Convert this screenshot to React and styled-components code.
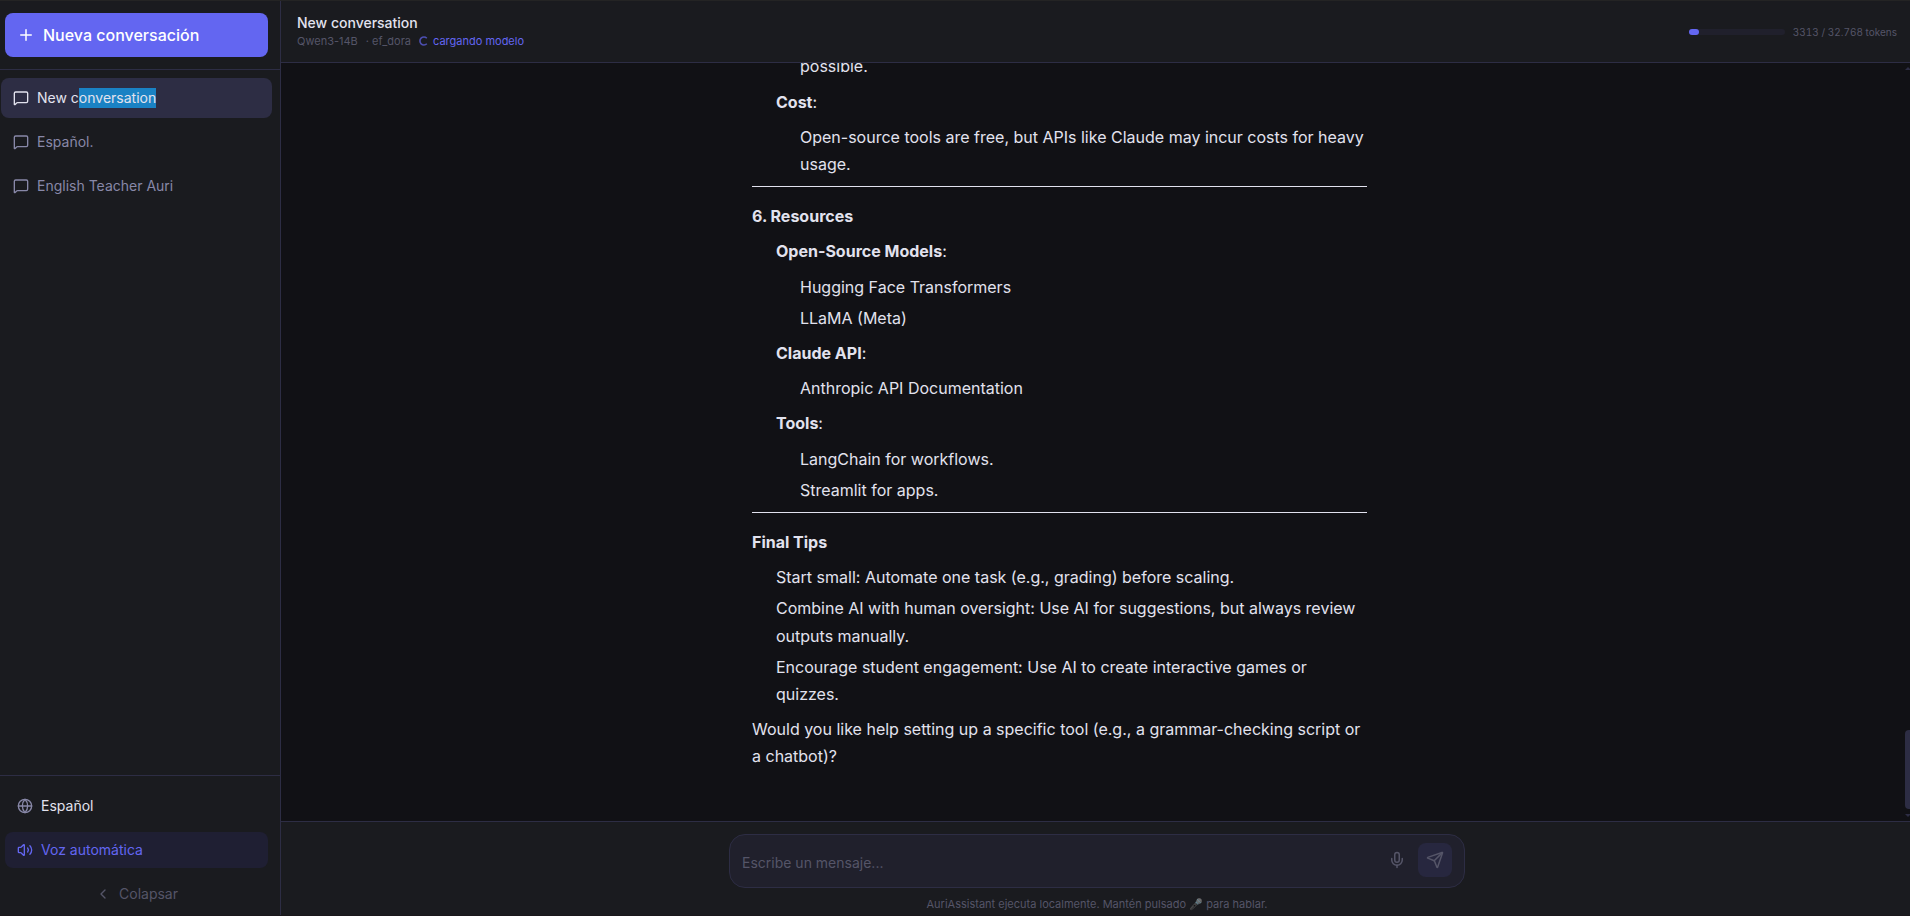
import React from 'react';
import styled, { createGlobalStyle } from 'styled-components';
import { ChevronLeft, Globe, MessageSquare, Mic, Plus, Send, Volume2 } from 'lucide-react';

const GlobalStyle = createGlobalStyle`
  * {
    box-sizing: border-box;
  }
  body {
    margin: 0;
    overflow: hidden;
    background: #111115;
    color: #e2e2ee;
    font-family: Inter, sans-serif;
    font-size: 16px;
  }
  button, textarea {
    font: inherit;
  }
`;

const Layout = styled.div`
  display: flex;
  height: 100vh;
  border-top: 1px solid #242424;
  border-bottom: 1px solid #1a171b;
  overflow: hidden;
`;

const Sidebar = styled.aside`
  display: flex;
  flex-direction: column;
  flex: none;
  width: 281px;
  background: #1a1b1f;
  border-right: 1px solid #2d2d44;
`;

const SidebarTop = styled.div`
  padding: 12px 12px 12px 5px;
  border-bottom: 1px solid #2d2d44;
`;

const NewButton = styled.button`
  display: flex;
  align-items: center;
  gap: 8px;
  width: 100%;
  height: 44px;
  padding: 0 12px;
  border: 0;
  border-radius: 8px;
  background: #6366f1;
  color: #fff;
  font-weight: 500;
`;

const ChatList = styled.nav`
  display: flex;
  flex: 1;
  flex-direction: column;
  gap: 4px;
  padding: 8px 8px 8px 1px;
`;

const ChatItem = styled.a`
  display: flex;
  align-items: center;
  gap: 8px;
  height: 40px;
  padding: 0 12px;
  border-radius: 8px;
  background: ${({ $active }) => ($active ? '#2d2d44' : 'transparent')};
  color: ${({ $active }) => ($active ? '#e2e2ee' : '#8888a8')};
  font-size: 14px;
  line-height: 20px;
`;

const Selected = styled.span`
  display: inline-block;
  height: 20px;
  background: #1a82c4;
`;

const SidebarFooter = styled.div`
  display: flex;
  flex-direction: column;
  gap: 8px;
  padding: 12px 12px 3px 5px;
  border-top: 1px solid #2d2d44;
`;

const FooterButton = styled.button`
  display: flex;
  align-items: center;
  justify-content: ${({ $center }) => ($center ? 'center' : 'flex-start')};
  gap: 8px;
  height: 36px;
  padding: 0 12px;
  border: 0;
  border-radius: 8px;
  background: ${({ $on }) => ($on ? '#1f1f33' : 'transparent')};
  color: ${({ $on, $center }) => ($on ? '#6366f1' : $center ? '#555568' : '#e2e2ee')};
  font-size: 14px;
  line-height: 20px;
`;

const Main = styled.main`
  display: flex;
  flex: 1;
  flex-direction: column;
  min-width: 0;
`;

const Header = styled.header`
  display: flex;
  flex: none;
  align-items: center;
  justify-content: space-between;
  height: 62px;
  padding: 0 13px 0 16px;
  background: #1a1b1f;
  border-bottom: 1px solid #2d2d44;
`;

const Heading = styled.div`
  padding-bottom: 2px;
`;

const Title = styled.h1`
  margin: 0;
  font-size: 14px;
  font-weight: 500;
  line-height: 20px;
`;

const Meta = styled.div`
  display: flex;
  align-items: center;
  height: 16px;
  color: #555568;
  font-size: 11px;
`;

const Voice = styled.span`
  margin-left: 8px;
`;

const Loading = styled.span`
  display: flex;
  align-items: center;
  gap: 5px;
  margin-left: 8px;
  color: #6366f1;
`;

const Spinner = styled.svg`
  opacity: 0.7;
`;

const Usage = styled.div`
  display: flex;
  align-items: center;
  gap: 8px;
  color: #555568;
  font-size: 10px;
  font-variant-numeric: tabular-nums;
`;

const UsageTrack = styled.div`
  width: 96px;
  height: 6px;
  border-radius: 3px;
  background: #20202c;
`;

const UsageFill = styled.div`
  height: 100%;
  border-radius: 3px;
  background: #6366f1;
`;

const Scroller = styled.section`
  display: flex;
  flex: 1;
  min-height: 0;
  overflow: hidden;
`;

const Messages = styled.div`
  display: flex;
  flex: 1;
  flex-direction: column;
  align-items: center;
  justify-content: flex-end;
  padding: 0 67px 42.36px 0;
`;

const Scrollbar = styled.div`
  display: flex;
  flex: none;
  flex-direction: column;
  justify-content: space-between;
  width: 5px;
  padding: 4px 0;
`;

const Thumb = styled.div`
  height: 79px;
  margin-top: auto;
  margin-bottom: 5px;
  border-radius: 4px 0 0 4px;
  background: #2d2d44;
`;

const Markdown = styled.article`
  width: 615px;
  line-height: 27.2px;

  p {
    margin: 8px 0;
  }
  h3 {
    margin: 16px 0 8px;
    font-size: 16px;
    font-weight: 700;
  }
  ul {
    margin: 8px 0;
    padding-left: 24px;
    list-style: none;
  }
  li {
    margin: 4px 0;
  }
  hr {
    margin: 8px 0;
    border: 0;
    border-top: 1px solid #e2e2ee;
  }
  strong {
    font-weight: 700;
  }
`;

const Composer = styled.footer`
  display: flex;
  flex: none;
  flex-direction: column;
  align-items: center;
  height: 94px;
  padding: 12px 0 0 3px;
  background: #1a1b1f;
  border-top: 1px solid #2d2d44;
`;

const InputBox = styled.div`
  display: flex;
  align-items: center;
  width: 736px;
  height: 54px;
  padding: 0 12px;
  border: 1px solid #2d2d44;
  border-radius: 16px;
  background: #20202c;
`;

const Input = styled.textarea`
  flex: 1;
  height: 24px;
  margin-top: 4px;
  padding: 0;
  border: 0;
  outline: 0;
  resize: none;
  background: transparent;
  color: #e2e2ee;
  font-size: 14px;
  line-height: 24px;
  &::placeholder {
    color: #555568;
  }
`;

const IconButton = styled.button`
  display: flex;
  align-items: center;
  justify-content: center;
  width: 34px;
  height: 34px;
  margin: 0 0 2px 4px;
  padding: 0;
  border: 0;
  border-radius: 8px;
  background: ${({ $filled }) => ($filled ? '#27273f' : 'transparent')};
  color: #555568;
`;

const Hint = styled.p`
  margin: 8px 0 0;
  color: #555568;
  font-size: 11px;
  line-height: 16px;
`;

const Emoji = styled.span`
  opacity: 0.6;
`;

const used = 3313;
const limit = 32768;

const chats = [
  { id: 2, title: 'Español.' },
  { id: 3, title: 'English Teacher Auri' }
];

export default function App() {
  return (
    <>
      <GlobalStyle />
      <Layout>
        <Sidebar>
          <SidebarTop>
            <NewButton>
              <Plus size={18} /> Nueva conversación
            </NewButton>
          </SidebarTop>
          <ChatList>
            <ChatItem $active>
              <MessageSquare size={16} />
              <span>
                New c<Selected>onversation</Selected>
              </span>
            </ChatItem>
            {chats.map(({ id, title }) => (
              <ChatItem key={id}>
                <MessageSquare size={16} />
                <span>{title}</span>
              </ChatItem>
            ))}
          </ChatList>
          <SidebarFooter>
            <FooterButton>
              <Globe size={16} color="#8888a8" /> Español
            </FooterButton>
            <FooterButton $on>
              <Volume2 size={16} /> Voz automática
            </FooterButton>
            <FooterButton $center>
              <ChevronLeft size={16} /> Colapsar
            </FooterButton>
          </SidebarFooter>
        </Sidebar>

        <Main>
          <Header>
            <Heading>
              <Title>New conversation</Title>
              <Meta>
                <span>Qwen3-14B</span>
                <Voice>· ef_dora</Voice>
                <Loading>
                  <Spinner width="9" height="10" viewBox="0 0 9 10" fill="none" stroke="currentColor">
                    <path d="M7.8 2.2A4 4 0 1 0 7.8 7.8" strokeWidth="1.6" />
                  </Spinner>
                  cargando modelo
                </Loading>
              </Meta>
            </Heading>
            <Usage>
              <UsageTrack>
                <UsageFill style={{ width: `${(used / limit) * 100}%` }} />
              </UsageTrack>
              {used} / 32.768 tokens
            </Usage>
          </Header>

          <Scroller>
            <Messages>
              <Markdown>
                <ul>
                  <li>
                    <ul>
                      <li>possible.</li>
                    </ul>
                  </li>
                  <li>
                    <p>
                      <strong>Cost</strong>:
                    </p>
                    <ul>
                      <li>Open-source tools are free, but APIs like Claude may incur costs for heavy usage.</li>
                    </ul>
                  </li>
                </ul>
                <hr />
                <h3>6. Resources</h3>
                <ul>
                  <li>
                    <p>
                      <strong>Open-Source Models</strong>:
                    </p>
                    <ul>
                      <li>Hugging Face Transformers</li>
                      <li>LLaMA (Meta)</li>
                    </ul>
                  </li>
                  <li>
                    <p>
                      <strong>Claude API</strong>:
                    </p>
                    <ul>
                      <li>Anthropic API Documentation</li>
                    </ul>
                  </li>
                  <li>
                    <p>
                      <strong>Tools</strong>:
                    </p>
                    <ul>
                      <li>LangChain for workflows.</li>
                      <li>Streamlit for apps.</li>
                    </ul>
                  </li>
                </ul>
                <hr />
                <h3>Final Tips</h3>
                <ul>
                  <li>Start small: Automate one task (e.g., grading) before scaling.</li>
                  <li>Combine AI with human oversight: Use AI for suggestions, but always review outputs manually.</li>
                  <li>Encourage student engagement: Use AI to create interactive games or quizzes.</li>
                </ul>
                <p>Would you like help setting up a specific tool (e.g., a grammar-checking script or a chatbot)?</p>
              </Markdown>
            </Messages>
            <Scrollbar>
              <svg width="5" height="3" fill="#2d2d44">
                <path d="M0 3L3 0L5 2V3Z" />
              </svg>
              <Thumb />
              <svg width="5" height="3" fill="#2d2d44">
                <path d="M0 0H5V1L3 3Z" />
              </svg>
            </Scrollbar>
          </Scroller>

          <Composer>
            <InputBox>
              <Input placeholder="Escribe un mensaje..." />
              <IconButton>
                <Mic size={18} />
              </IconButton>
              <IconButton $filled>
                <Send size={18} />
              </IconButton>
            </InputBox>
            <Hint>
              AuriAssistant ejecuta localmente. Mantén pulsado <Emoji>🎤</Emoji> para hablar.
            </Hint>
          </Composer>
        </Main>
      </Layout>
    </>
  );
}
